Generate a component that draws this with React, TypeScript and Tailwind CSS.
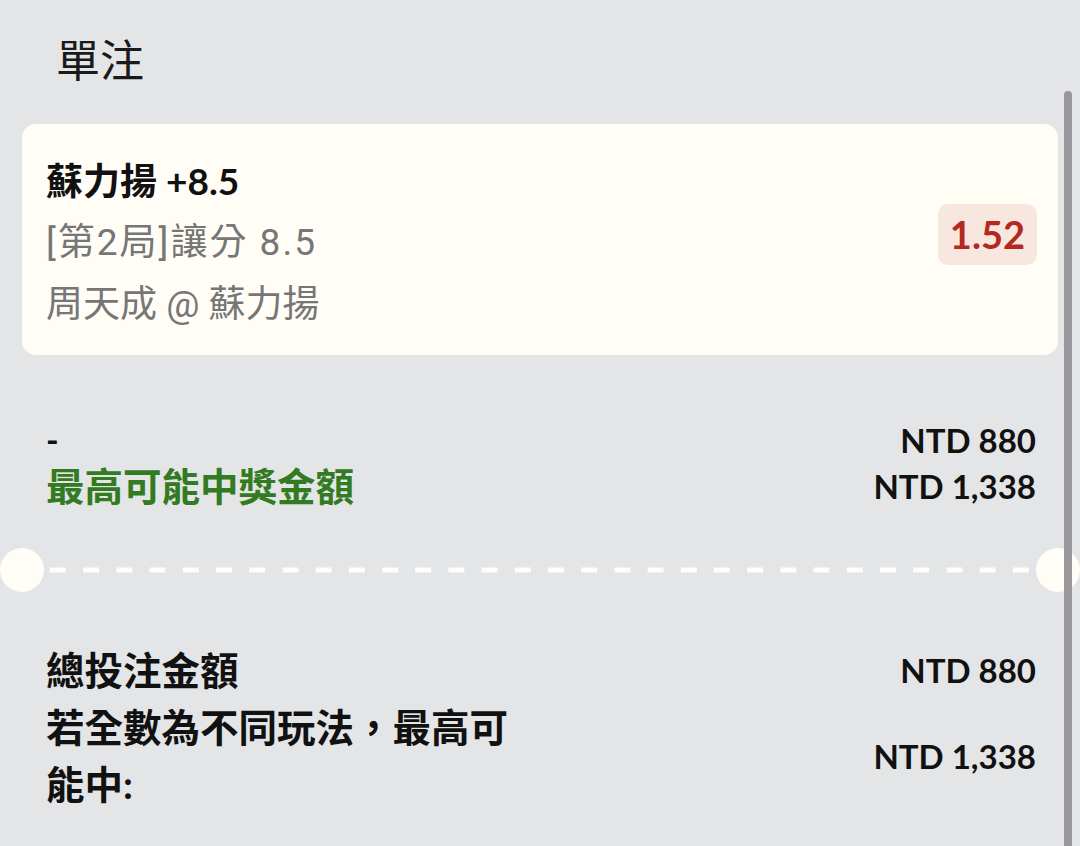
import React from 'react';

const font = { fontFamily: 'Lato, "Noto Sans CJK TC", sans-serif' };
const sub = { fontFamily: 'Roboto, "Noto Sans CJK TC", sans-serif' };

function Divider() {
  return (
    <div className="flex items-center gap-[6px] mt-[39px]">
      <div className="w-[44px] h-[44px] rounded-full bg-[#fffdf5] shrink-0" />
      <svg className="flex-1 h-[6px]" preserveAspectRatio="none">
        <line x1="0" y1="3" x2="100%" y2="3" stroke="#fffdf5" strokeWidth="5" strokeDasharray="16 17.2" />
      </svg>
      <div className="w-[44px] h-[44px] rounded-full bg-[#fffdf5] shrink-0" />
    </div>
  );
}

export default function App() {
  const bet = {
    pick: '蘇力揚',
    line: '+8.5',
    market: '[第2局]讓分 8.5',
    match: '周天成 @ 蘇力揚',
    odds: '1.52',
  };

  return (
    <div className="relative min-h-[846px] w-[1080px] bg-[#e4e5e7] overflow-hidden text-[#111]" style={font}>
      <div className="px-[22px]">
        <h1 className="pt-[38px] pl-[34px] text-[44px] leading-[44px] font-normal text-[#1a1a1a]">單注</h1>

        <div className="mt-[42px] bg-[#fffdf5] rounded-[14px] pl-[24px] pr-[21px] pt-[26px] pb-[19px] flex items-center justify-between">
          <div className="text-[37px] leading-[62px]">
            <div className="font-bold text-[#111]">{bet.pick} {bet.line}</div>
            <div className="text-[#767676] tracking-[2px]" style={sub}>{bet.market}</div>
            <div className="text-[#767676]" style={sub}>{bet.match}</div>
          </div>
          <div className="bg-[#f8e7df] rounded-[10px] px-[12px] h-[61px] flex items-center text-[38px] font-bold text-[#b5281f] -mt-[17px]">
            {bet.odds}
          </div>
        </div>

        <div className="mt-[62px] pl-[24px] pr-[22px] leading-[46px]">
          <div className="flex justify-between items-center">
            <span className="text-[34px] font-bold">-</span>
            <span className="text-[33px] font-bold">NTD 880</span>
          </div>
          <div className="flex justify-between items-center">
            <span className="text-[38.5px] font-bold text-[#337b22]">最高可能中獎金額</span>
            <span className="text-[33px] font-bold">NTD 1,338</span>
          </div>
        </div>
      </div>

      <Divider />

      <div className="pl-[46px] pr-[44px] mt-[50px] leading-[57px]">
        <div className="flex justify-between items-center">
          <span className="text-[38.5px] font-bold">總投注金額</span>
          <span className="text-[33px] font-bold">NTD 880</span>
        </div>
        <div className="flex justify-between items-center">
          <span className="w-[480px] text-[38.5px] font-bold">若全數為不同玩法，最高可能中:</span>
          <span className="text-[33px] font-bold">NTD 1,338</span>
        </div>
      </div>

      <div className="absolute right-[8px] top-[91px] bottom-0 w-[8px] rounded-t-full bg-[#98989c]" />
    </div>
  );
}
